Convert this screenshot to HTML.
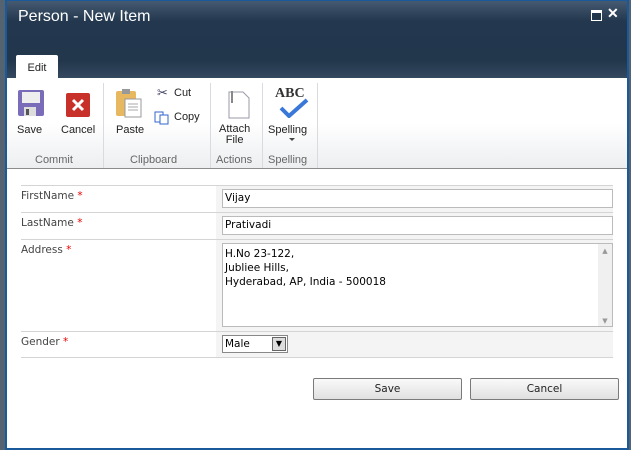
<!DOCTYPE html><html><head><style>
body{margin:0;width:631px;height:450px;background:#556270;position:relative;overflow:hidden;font-family:"Liberation Sans",sans-serif}
.dlg{position:absolute;left:5px;top:0;width:620px;height:447px;border:1px solid #1a5a9a;border-width:1px 2px 2px 2px;background:#fff;overflow:hidden}
.hdr{position:absolute;left:0;top:0;right:0;height:77px;background:linear-gradient(#455a70 0px,#23384e 20px,#22364c 60px,#34495f 77px)}
.title{position:absolute;left:11px;top:7px;color:#fff;font-size:16px}
.tab{position:absolute;left:9px;top:54px;width:42px;height:24px;background:#fff;border-radius:2px 2px 0 0;font-size:11px;text-align:center;line-height:26px;color:#222}
.rib{position:absolute;left:0;top:77px;right:0;height:90px;background:linear-gradient(#fff 45px,#eceef0 90px);border-bottom:1px solid #8c8c8c}
.lbl{position:absolute;font-size:11px;color:#222;text-align:center}
.grp{position:absolute;top:150px;font-size:11px;color:#666}
.sep{position:absolute;top:82px;width:1px;height:85px;background:#d8dbdf}
.row{position:absolute;left:14px;width:592px;border-top:1px solid #d4d4d4}
.fl{position:absolute;left:0;font-size:10.5px;color:#444;top:4px;font-family:"DejaVu Sans",sans-serif}
.fl b{color:#e00;font-weight:normal}
.fg{position:absolute;left:195px;right:0;top:0;bottom:0;background:#f4f4f4}
.inp{position:absolute;left:6px;border:1px solid #bbb;background:#fff;font-size:10.5px;font-family:"DejaVu Sans",sans-serif;line-height:17px;padding-left:2px;box-sizing:border-box;width:391px;height:19px}
.btn{position:absolute;top:377px;height:20px;border:1px solid #7a7a7a;border-radius:2px;background:linear-gradient(#fafafa,#e0e0e0);font-size:10.5px;font-family:"DejaVu Sans",sans-serif;text-align:center;line-height:20px;color:#222}
</style></head><body>
<div class="dlg">
<div class="hdr"><div class="title">Person - New Item</div>
<div style="position:absolute;left:584px;top:9px;width:9px;height:7px;border:1px solid #fff;border-top-width:3px;background:#22364c"></div>
<div style="position:absolute;left:600px;top:4px;color:#fff;font-size:14px;font-weight:bold">✕</div>
<div class="tab">Edit</div></div>
<div class="rib">
<svg style="position:absolute;left:11px;top:12px" width="26" height="26"><rect x="0" y="0" width="26" height="26" rx="2" fill="#7a6cb8"/><rect x="4" y="2" width="18" height="11" fill="#eee"/><rect x="6" y="17" width="12" height="9" fill="#ddd"/><rect x="8" y="19" width="3" height="6" fill="#555"/></svg>
<div class="lbl" style="left:10px;top:46px">Save</div>
<svg style="position:absolute;left:59px;top:15px" width="24" height="24"><rect width="24" height="24" rx="2" fill="#c8302a"/><path d="M7 7L17 17M17 7L7 17" stroke="#fff" stroke-width="3"/></svg>
<div class="lbl" style="left:54px;top:46px">Cancel</div>
<div class="sep" style="left:96px;top:5px"></div>
<svg style="position:absolute;left:108px;top:10px" width="28" height="30"><rect x="1" y="3" width="20" height="25" rx="2" fill="#e8b860"/><rect x="7" y="1" width="8" height="5" fill="#999"/><path d="M10 11h16v18H10z" fill="#fff" stroke="#999"/><path d="M13 16h10M13 19h10M13 22h10" stroke="#aaa"/></svg>
<div class="lbl" style="left:109px;top:46px">Paste</div>
<div style="position:absolute;left:150px;top:7px;color:#446;font-size:13px">✂</div>
<div class="lbl" style="left:167px;top:9px">Cut</div>
<svg style="position:absolute;left:147px;top:33px" width="16" height="14"><rect x="1" y="1" width="8" height="10" fill="#fff" stroke="#36c"/><rect x="6" y="4" width="8" height="9" fill="#fff" stroke="#36c"/></svg>
<div class="lbl" style="left:167px;top:33px">Copy</div>
<div class="sep" style="left:203px;top:5px"></div>
<svg style="position:absolute;left:216px;top:12px" width="28" height="30"><path d="M6 2h14l6 6v20H6z" fill="#fff" stroke="#99a"/><path d="M9 1v12" stroke="#888" stroke-width="2"/></svg>
<div class="lbl" style="left:212px;top:46px;line-height:11px">Attach<br>File</div>
<div class="sep" style="left:255px;top:5px"></div>
<div style="position:absolute;left:268px;top:8px;font-family:'Liberation Serif',serif;font-weight:bold;font-size:14px;color:#333">ABC</div>
<svg style="position:absolute;left:272px;top:20px" width="30" height="20"><path d="M2 10l8 8L28 2" stroke="#3a78d8" stroke-width="4" fill="none"/></svg>
<div class="lbl" style="left:261px;top:46px">Spelling</div>
<div style="position:absolute;left:282px;top:60px;border:3px solid transparent;border-top:3px solid #444"></div>
<div class="sep" style="left:310px;top:5px"></div>
<div class="grp" style="left:28px;top:76px">Commit</div>
<div class="grp" style="left:123px;top:76px">Clipboard</div>
<div class="grp" style="left:209px;top:76px">Actions</div>
<div class="grp" style="left:261px;top:76px">Spelling</div>
</div>
<div class="row" style="top:184px;height:26px"><div class="fl">FirstName <b>*</b></div><div class="fg"><div class="inp" style="top:3px">Vijay</div></div></div>
<div class="row" style="top:211px;height:27px"><div class="fl">LastName <b>*</b></div><div class="fg"><div class="inp" style="top:3px">Prativadi</div></div></div>
<div class="row" style="top:238px;height:92px"><div class="fl">Address <b>*</b></div><div class="fg"><div class="inp" style="top:3px;height:84px;line-height:14px;padding-top:3px">H.No 23-122,<br>Jubliee Hills,<br>Hyderabad, AP, India - 500018<div style="position:absolute;right:0;top:0;width:14px;height:82px;background:#f0f0f0;font-size:7px;color:#999;text-align:center">▲<br><br><br><br><br>▼</div></div></div></div>
<div class="row" style="top:330px;height:25px;border-bottom:1px solid #d4d4d4"><div class="fl">Gender <b>*</b></div><div class="fg"><div class="inp" style="top:3px;width:66px;height:18px;border-color:#888">Male<div style="position:absolute;right:1px;top:1px;width:14px;height:14px;background:#ddd;border:1px solid #666;box-sizing:border-box;font-size:8px;text-align:center;line-height:12px">▼</div></div></div></div>
<div class="btn" style="left:306px;width:147px">Save</div>
<div class="btn" style="left:463px;width:147px">Cancel</div>
</div>
</body></html>
